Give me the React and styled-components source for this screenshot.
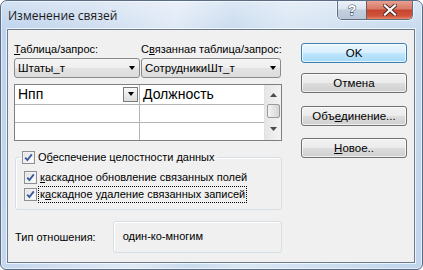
import styled, { createGlobalStyle } from "styled-components";

const GlobalStyle = createGlobalStyle`
  html, body {
    margin: 0;
    padding: 0;
    background: #ffffff;
    overflow: hidden;
  }
`;

const UI_FONT = `"Liberation Sans", Arial, sans-serif`;

const Frame = styled.div`
  width: 423px;
  height: 270px;
  box-sizing: border-box;
  border: 1px solid #5a6d85;
  border-radius: 7px 7px 6px 6px;
  background:
    linear-gradient(180deg, rgba(255,255,255,0.35) 0%, rgba(255,255,255,0) 30px),
    linear-gradient(100deg, #bcd2ec 0%, #cddcf0 20%, #dfe9f6 38%, #c9dbef 50%, #d9e6f4 62%, #bfd5ec 100%);
  box-shadow: inset 0 0 0 1px rgba(255,255,255,0.55);
  display: flex;
  flex-direction: column;
  overflow: hidden;
  font-family: ${UI_FONT};
  color: #000;
`;

const TitleBar = styled.div`
  height: 28px;
  display: flex;
  align-items: flex-start;
  padding-left: 7px;
`;

const Title = styled.div`
  flex: 1;
  padding-top: 6px;
  font-family: "Open Sans", "Noto Sans", sans-serif;
  font-size: 12px;
  color: #1a1a1a;
`;

const CaptionButtons = styled.div`
  display: flex;
  margin-top: -1px;
  margin-right: 9px;
  border: 1px solid #5f6f84;
  border-top: none;
  border-radius: 0 0 5px 5px;
  overflow: hidden;
  box-shadow: 0 0 0 1px rgba(255,255,255,0.5);
`;

const CaptionButton = styled.div`
  width: ${(p) => p.$w}px;
  height: 19px;
  display: flex;
  align-items: center;
  justify-content: center;
  background: ${(p) =>
    p.$close
      ? "linear-gradient(180deg, #e9a597 0%, #d97b68 45%, #c6452f 55%, #d2543c 85%, #e48a6a 100%)"
      : "linear-gradient(180deg, #eef3f9 0%, #dce5f0 45%, #c3cfde 55%, #b9c7d9 100%)"};
  border-left: ${(p) => (p.$close ? "1px solid #6e5a58" : "none")};
`;

const Client = styled.div`
  flex: 1;
  margin: 0 7px 6px 6px;
  border: 1px solid #6b7a8c;
  box-shadow: 0 0 0 1px rgba(255,255,255,0.7);
  background: #f0f0f0;
  display: flex;
  padding: 12px 0 0 6px;
  gap: 19px;
  font-size: 11px;
`;

const LeftColumn = styled.div`
  width: 268px;
  display: flex;
  flex-direction: column;
`;

const RightColumn = styled.div`
  width: 106px;
  display: flex;
  flex-direction: column;
  padding-top: 1px;
`;

const LabelRow = styled.div`
  display: flex;
  height: 14px;
  line-height: 14px;
  margin-bottom: 2px;
`;

const Label = styled.div`
  width: ${(p) => p.$w}px;
  white-space: nowrap;
`;

const ComboRow = styled.div`
  display: flex;
  gap: 1px;
`;

const Combo = styled.div`
  width: ${(p) => p.$w}px;
  height: 20px;
  box-sizing: border-box;
  border: 1px solid #8a8a8a;
  border-radius: 3px;
  background: linear-gradient(180deg, #f5f5f5 0%, #eeeeee 48%, #e3e3e3 52%, #dcdcdc 100%);
  display: flex;
  align-items: center;
  padding: 0 4px 0 3px;
  font-size: 11.5px;
`;

const ComboText = styled.span`
  flex: 1;
  white-space: nowrap;
`;

const Arrow = styled.span`
  width: 0;
  height: 0;
  border-left: 3.5px solid transparent;
  border-right: 3.5px solid transparent;
  border-top: 4px solid #000;
`;

const Grid = styled.div`
  margin-top: 6px;
  width: 268px;
  height: 57px;
  box-sizing: border-box;
  border: 1px solid #7f7f7f;
  background: #fff;
  display: flex;
`;

const GridBody = styled.div`
  flex: 1;
  display: flex;
  flex-direction: column;
`;

const GridRow = styled.div`
  display: flex;
  height: ${(p) => p.$h}px;
  border-bottom: ${(p) => (p.$last ? "none" : "1px solid #b4b4b4")};
`;

const GridCell = styled.div`
  width: ${(p) => p.$w}px;
  border-right: ${(p) => (p.$divider ? "1px solid #b4b4b4" : "none")};
  display: flex;
  align-items: center;
  padding-left: 3px;
  box-sizing: border-box;
  font-size: 14px;
`;

const CellText = styled.span`
  flex: 1;
`;

const CellDrop = styled.div`
  width: 15px;
  height: 15px;
  box-sizing: border-box;
  border: 1px solid #7a7a7a;
  background: linear-gradient(180deg, #f7f7f7, #dedede);
  display: flex;
  align-items: center;
  justify-content: center;
  margin-right: 1px;
`;

const ScrollBar = styled.div`
  width: 17px;
  border-left: 1px solid #e2e2e2;
  background: linear-gradient(90deg, #e6e6e6, #f3f3f3);
  display: flex;
  flex-direction: column;
  align-items: center;
`;

const ScrollArrow = styled.div`
  height: ${(p) => p.$h}px;
  display: flex;
  align-items: center;
  justify-content: center;
`;

const Thumb = styled.div`
  width: 13px;
  height: 14px;
  box-sizing: border-box;
  border: 1px solid #9a9a9a;
  border-radius: 2px;
  background: linear-gradient(90deg, #f4f4f4, #e2e2e2 60%, #d6d6d6);
`;

const GroupBox = styled.fieldset`
  margin: 10px 0 0 1px;
  padding: 5px 0 6px 8px;
  border: 1px solid #d5dfe5;
  border-radius: 3px;
  box-shadow: inset 1px 1px 0 #ffffff;
  min-width: 0;
`;

const Legend = styled.legend`
  padding: 0 2px 0 2px;
  margin-left: -4px;
  display: flex;
  align-items: center;
  height: 13px;
`;

const CheckRow = styled.div`
  display: flex;
  align-items: center;
  height: 17px;
`;

const Box = styled.span`
  width: 13px;
  height: 13px;
  box-sizing: border-box;
  border: 1px solid #8e8f8f;
  background: linear-gradient(135deg, #dedede 0%, #f4f4f4 60%, #ffffff 100%);
  box-shadow: inset 0 0 0 1px #f2f2f2;
  display: inline-flex;
  align-items: center;
  justify-content: center;
  margin-right: 2px;
  flex-shrink: 0;
`;

const CheckText = styled.span`
  white-space: nowrap;
  padding: 1px 1px;
  outline: ${(p) => (p.$focus ? "1px dotted #000" : "none")};
  line-height: 13px;
`;

const RelationRow = styled.div`
  display: flex;
  align-items: center;
  margin-top: 11px;
`;

const RelationLabel = styled.div`
  width: 98px;
  padding-left: 1px;
`;

const RelationBox = styled.div`
  width: 170px;
  height: 32px;
  box-sizing: border-box;
  border: 1px solid #d5dfe5;
  border-radius: 3px;
  box-shadow: inset 1px 1px 0 #ffffff;
  padding: 8px 0 0 9px;
`;

const Button = styled.div`
  height: 20px;
  box-sizing: border-box;
  margin-top: ${(p) => p.$mt || 0}px;
  border: 1px solid ${(p) => (p.$default ? "#3c7fb1" : "#707070")};
  border-radius: 3px;
  background: ${(p) =>
    p.$default
      ? "linear-gradient(180deg, #eaf6fd 0%, #d9f0fc 48%, #bee6fd 52%, #a7d9f5 100%)"
      : "linear-gradient(180deg, #f2f2f2 0%, #ebebeb 48%, #dddddd 52%, #cfcfcf 100%)"};
  box-shadow: inset 0 0 0 1px rgba(255,255,255,0.7);
  display: flex;
  align-items: center;
  justify-content: center;
  white-space: nowrap;
  font-size: 11.5px;
`;

function Check() {
  return (
    <Box>
      <svg width="9" height="9" viewBox="0 0 9 9">
        <path d="M1.2 4.6 L3.4 7 L7.8 1.4" fill="none" stroke="#3d5c9f" strokeWidth="1.9" />
      </svg>
    </Box>
  );
}

function TinyArrow({ up }) {
  return (
    <svg width="7" height="4" viewBox="0 0 7 4">
      <path d={up ? "M0 4 L3.5 0 L7 4 Z" : "M0 0 L3.5 4 L7 0 Z"} fill="#4a4a4a" />
    </svg>
  );
}

export default function App() {
  return (
    <>
      <GlobalStyle />
      <Frame>
        <TitleBar>
          <Title>Изменение связей</Title>
          <CaptionButtons>
            <CaptionButton $w={28}>
              <svg width="12" height="14" viewBox="0 0 12 14">
                <text x="6" y="12" textAnchor="middle" fontFamily="Liberation Sans, sans-serif" fontWeight="bold" fontSize="14" fill="#fff" stroke="#3a4a5e" strokeWidth="1" paintOrder="stroke">?</text>
              </svg>
            </CaptionButton>
            <CaptionButton $w={45} $close>
              <svg width="14" height="12" viewBox="0 0 14 12">
                <path d="M2 1.5 L12 10.5 M12 1.5 L2 10.5" stroke="#4a2a25" strokeWidth="4" strokeLinecap="square" />
                <path d="M2 1.5 L12 10.5 M12 1.5 L2 10.5" stroke="#ffffff" strokeWidth="2.2" strokeLinecap="square" />
              </svg>
            </CaptionButton>
          </CaptionButtons>
        </TitleBar>
        <Client>
          <LeftColumn>
            <LabelRow>
              <Label $w={127}><u>Т</u>аблица/запрос:</Label>
              <Label $w={141}>С<u>в</u>язанная таблица/запрос:</Label>
            </LabelRow>
            <ComboRow>
              <Combo $w={126}>
                <ComboText>Штаты_т</ComboText>
                <Arrow />
              </Combo>
              <Combo $w={140}>
                <ComboText>СотрудникиШт_т</ComboText>
                <Arrow />
              </Combo>
            </ComboRow>
            <Grid>
              <GridBody>
                <GridRow $h={19}>
                  <GridCell $w={125} $divider>
                    <CellText>Нпп</CellText>
                    <CellDrop><Arrow /></CellDrop>
                  </GridCell>
                  <GridCell $w={124}>
                    <CellText>Должность</CellText>
                  </GridCell>
                </GridRow>
                <GridRow $h={18}>
                  <GridCell $w={125} $divider />
                  <GridCell $w={124} />
                </GridRow>
                <GridRow $h={17} $last>
                  <GridCell $w={125} $divider />
                  <GridCell $w={124} />
                </GridRow>
              </GridBody>
              <ScrollBar>
                <ScrollArrow $h={19}><TinyArrow up /></ScrollArrow>
                <Thumb />
                <ScrollArrow $h={22}><TinyArrow /></ScrollArrow>
              </ScrollBar>
            </Grid>
            <GroupBox>
              <Legend>
                <Check />
                <CheckText>О<u>б</u>еспечение целостности данных</CheckText>
              </Legend>
              <CheckRow>
                <Check />
                <CheckText><u>к</u>аскадное обновление связанных полей</CheckText>
              </CheckRow>
              <CheckRow>
                <Check />
                <CheckText $focus>к<u>а</u>скадное удаление связанных записей</CheckText>
              </CheckRow>
            </GroupBox>
            <RelationRow>
              <RelationLabel>Тип отношения:</RelationLabel>
              <RelationBox>один-ко-многим</RelationBox>
            </RelationRow>
          </LeftColumn>
          <RightColumn>
            <Button $default>OK</Button>
            <Button $mt={10}>Отмена</Button>
            <Button $mt={13}>Объ<u>е</u>динение...</Button>
            <Button $mt={12}><u>Н</u>овое..</Button>
          </RightColumn>
        </Client>
      </Frame>
    </>
  );
}
